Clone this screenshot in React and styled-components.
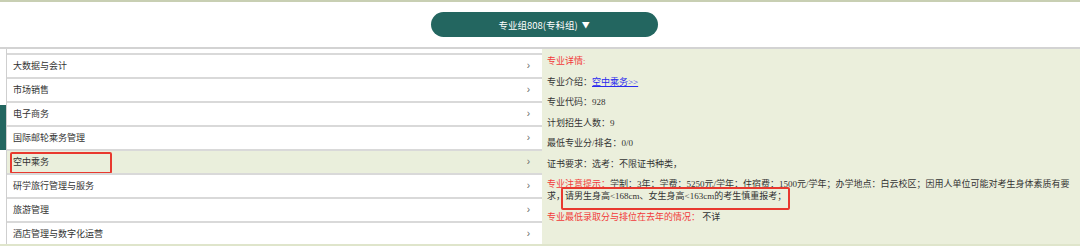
import React from "react";
import styled, { createGlobalStyle } from "styled-components";

const Global = createGlobalStyle`
  html, body { margin: 0; padding: 0; background: #ffffff; }
  body { font-family: "Liberation Serif", "Noto Sans CJK SC", serif; }
  * { box-sizing: border-box; }
`;

const Page = styled.div`
  width: 1080px;
  height: 246px;
  display: flex;
  flex-direction: column;
  overflow: hidden;
  background: #ffffff;
`;

const TopRule = styled.div`
  height: 2px;
  background: #c8cfb3;
  flex: none;
`;

const Header = styled.div`
  height: 45px;
  flex: none;
  display: flex;
  justify-content: center;
  align-items: flex-start;
  padding-top: 10px;
`;

const GroupButton = styled.button`
  width: 227px;
  height: 25px;
  margin-left: 8px;
  border: none;
  border-radius: 13px;
  background: #236660;
  color: #ffffff;
  font-family: "Noto Sans CJK SC", "Liberation Sans", sans-serif;
  font-size: 9.5px;
  display: flex;
  align-items: center;
  justify-content: center;
  gap: 4px;
  padding: 0;
  cursor: pointer;
`;

const Caret = styled.span`
  font-size: 8px;
  line-height: 1;
`;

const Divider = styled.div`
  height: 2px;
  background: #d3d3d3;
  flex: none;
`;

const Body = styled.div`
  flex: 1;
  display: flex;
  min-height: 0;
  border-bottom: 2px solid #dfe5cb;
`;

const Track = styled.div`
  width: 7px;
  flex: none;
  border-right: 1px solid #cfcfcf;
  padding-top: 56px;
`;

const Thumb = styled.div`
  width: 6px;
  height: 45px;
  background: #236660;
`;

const List = styled.div`
  width: 535px;
  flex: none;
  padding-top: 4px;
  display: flex;
  flex-direction: column;
  overflow: hidden;
`;

const Row = styled.div`
  height: 24px;
  flex: none;
  border-top: 2px solid #d9d9d9;
  background: ${(p) => (p.$active ? "#eaefdc" : "#ffffff")};
  display: flex;
  align-items: center;
  justify-content: space-between;
  padding: 0 12px 1px 6px;
  font-family: "Noto Sans CJK SC", "Liberation Sans", sans-serif;
  font-size: 9px;
  color: #333333;
  position: relative;
`;

const Chevron = styled.span`
  font-family: "Liberation Sans", sans-serif;
  font-size: 10px;
  color: #666666;
`;

const RedBox = styled.div`
  position: absolute;
  border: 2px solid #e8392f;
  border-radius: 2px;
  pointer-events: none;
`;

const RowBox = styled(RedBox)`
  left: 3px;
  top: 1px;
  width: 102px;
  height: 22px;
`;

const Detail = styled.div`
  flex: 1;
  background: #ebefdc;
  padding: 6px 2px 0 5px;
  font-size: 9px;
  color: #333333;
  position: relative;
`;

const Para = styled.p`
  margin: 0 0 8.5px 0;
  line-height: 12px;
`;

const Red = styled.span`
  color: #f23a3a;
`;

const Link = styled.a`
  color: #2a2aee;
  text-decoration: underline;
`;

const NoteBox = styled(RedBox)`
  left: 19px;
  top: 138px;
  width: 229px;
  height: 23px;
`;

const majors = [
  "大数据与会计",
  "市场销售",
  "电子商务",
  "国际邮轮乘务管理",
  "空中乘务",
  "研学旅行管理与服务",
  "旅游管理",
  "酒店管理与数字化运营",
];

export default function App() {
  return (
    <>
      <Global />
      <Page>
        <TopRule />
        <Header>
          <GroupButton>
            <span>专业组808(专科组)</span>
            <Caret>▼</Caret>
          </GroupButton>
        </Header>
        <Divider />
        <Body>
          <Track>
            <Thumb />
          </Track>
          <List>
            {majors.map((m) => (
              <Row key={m} $active={m === "空中乘务"}>
                <span>{m}</span>
                <Chevron>›</Chevron>
                {m === "空中乘务" && <RowBox />}
              </Row>
            ))}
          </List>
          <Detail>
            <Para>
              <Red>专业详情:</Red>
            </Para>
            <Para>
              专业介绍：<Link href="#">空中乘务&gt;&gt;</Link>
            </Para>
            <Para>专业代码：928</Para>
            <Para>计划招生人数：9</Para>
            <Para>最低专业分/排名：0/0</Para>
            <Para>证书要求：选考：不限证书种类，</Para>
            <Para>
              <Red>专业注意提示：</Red>
              学制：3年；学费：5250元/学年；住宿费：1500元/学年；办学地点：白云校区；因用人单位可能对考生身体素质有要
              <br />
              求，请男生身高&lt;168cm、女生身高&lt;163cm的考生慎重报考；
            </Para>
            <Para>
              <Red>专业最低录取分与排位在去年的情况：</Red> 不详
            </Para>
            <NoteBox />
          </Detail>
        </Body>
      </Page>
    </>
  );
}
